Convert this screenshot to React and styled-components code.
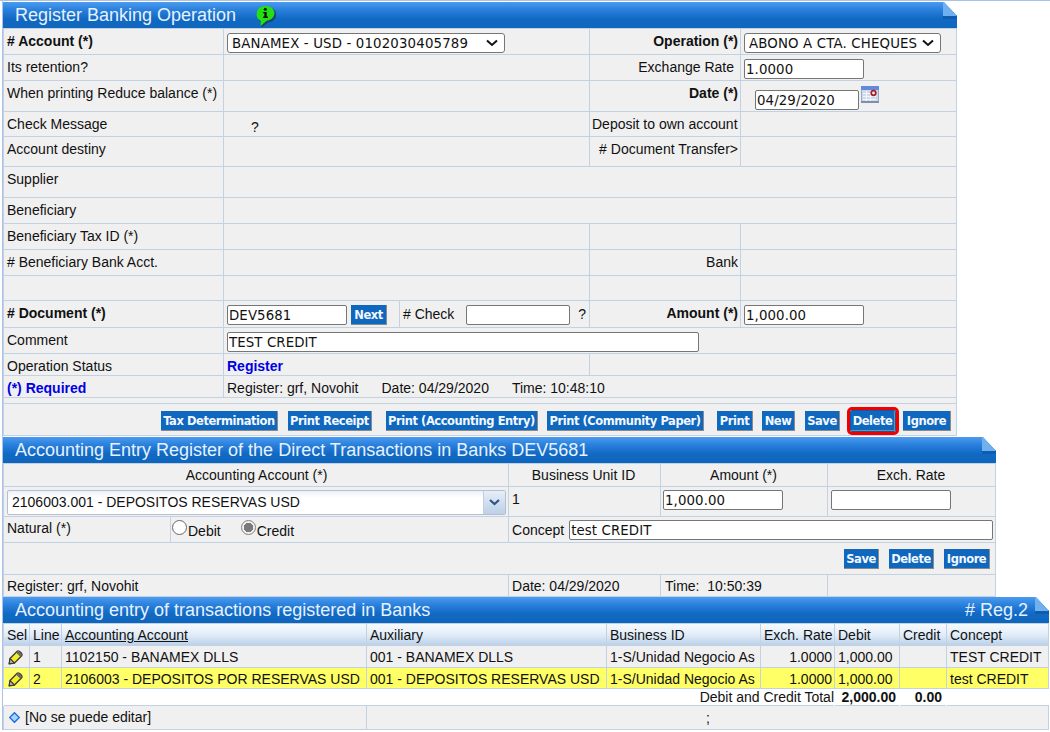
import React from 'react';
import styled, { createGlobalStyle } from 'styled-components';

const GlobalStyle = createGlobalStyle`
  html, body {
    margin: 0;
    padding: 0;
    background: #fff;
    font-family: "Liberation Sans", Arial, sans-serif;
    font-size: 14px;
    color: #111;
  }
`;

const Page = styled.div`
  width: 1047px;
  height: 729px;
  margin-top: 1px;
  margin-left: 2px;
  padding-top: 1px;
  box-sizing: border-box;
  border-left: 1px solid #a9c3e8;
  position: relative;
  &::before {
    content: '';
    position: absolute;
    top: -1px;
    left: -3px;
    width: 1050px;
    height: 1px;
    background: #a9c3e8;
  }
`;

const Panel = styled.section`
  width: ${(p) => p.$w}px;
  margin-top: ${(p) => p.$top || 0}px;
`;

const Header = styled.header`
  position: relative;
  height: 26px;
  margin-right: -1px;
  display: flex;
  align-items: center;
  justify-content: space-between;
  padding: 0 21px 0 12px;
  background: linear-gradient(#4b9bef 0%, #2a80dc 30%, #1169c4 65%, #0f66bc 100%);
  clip-path: polygon(0 0, calc(100% - 13px) 0, 100% 14px, 100% 100%, 0 100%);
`;

const Title = styled.h2`
  margin: 0;
  font-size: 18px;
  font-weight: normal;
  color: #e6f2fd;
  white-space: nowrap;
`;

const Fold = styled.svg`
  position: absolute;
  top: 0;
  right: 0;
`;

const Bubble = styled.svg`
  position: absolute;
  top: 2px;
  left: 250px;
`;

const Grid = styled.table`
  width: 100%;
  table-layout: fixed;
  border-collapse: collapse;
  background: #f0f0f0;
`;

const Row = styled.tr`
  height: ${(p) => p.$h}px;
`;

const Cell = styled.td`
  box-sizing: border-box;
  border: 1px solid #c2d2e2;
  padding: ${(p) => p.$pad || '4px 2px 0 3px'};
  vertical-align: top;
  line-height: 16px;
  white-space: nowrap;
  overflow: hidden;
  text-align: ${(p) => p.$align || 'left'};
  font-weight: ${(p) => (p.$bold ? 'bold' : 'normal')};
  color: ${(p) => (p.$blue ? '#0000e6' : 'inherit')};
`;

const Select = styled.select`
  display: inline-block;
  vertical-align: top;
  box-sizing: border-box;
  width: ${(p) => p.$w}px;
  height: 20px;
  padding: 0 0 0 4px;
  appearance: none;
  border: 1px solid #767676;
  border-radius: 3px;
  font-family: "DejaVu Sans", Verdana, sans-serif;
  font-size: 13.33px;
  letter-spacing: 0.15px;
  color: #111;
  background: #fff url("data:image/svg+xml,%3Csvg xmlns='http://www.w3.org/2000/svg' width='12' height='8'%3E%3Cpath d='M1 1.5 L6 6 L11 1.5' fill='none' stroke='%23111' stroke-width='2'/%3E%3C/svg%3E") no-repeat right 6px center;
`;

const Input = styled.input`
  display: inline-block;
  vertical-align: top;
  box-sizing: border-box;
  width: ${(p) => p.$w}px;
  height: 20px;
  margin-left: ${(p) => p.$ml || 0}px;
  margin-top: ${(p) => p.$mt || 0}px;
  padding: 0 1px;
  border: 1px solid #767676;
  border-radius: 2px;
  font-family: "DejaVu Sans", Verdana, sans-serif;
  font-size: 13.33px;
  letter-spacing: 0.1px;
  color: #111;
  background: #fff;
`;

const Btn = styled.button`
  display: inline-block;
  vertical-align: top;
  box-sizing: border-box;
  width: ${(p) => p.$w}px;
  height: 20px;
  margin-left: ${(p) => p.$ml || 0}px;
  padding: 0;
  border: 0;
  border-right: 1px solid #8a8a8a;
  border-bottom: 1px solid #8a8a8a;
  background: #0f67be;
  color: #f2f8ff;
  font-family: "DejaVu Sans", Verdana, sans-serif;
  font-size: 11.5px;
  font-weight: bold;
  letter-spacing: -0.45px;
  white-space: nowrap;
  outline: ${(p) => (p.$active ? '3px solid #f00000' : 'none')};
  outline-offset: 1px;
  box-shadow: ${(p) => (p.$active ? '0 0 0 1px #0d5ba8' : 'none')};
  border-radius: ${(p) => (p.$active ? '1px' : '0')};
`;

const BtnBar = styled.div`
  display: flex;
  justify-content: flex-end;
  padding-right: ${(p) => p.$right}px;
`;

const Inline = styled.span`
  margin-left: ${(p) => p.$ml || 0}px;
`;

const CalIcon = styled.svg`
  display: inline-block;
  vertical-align: top;
  margin-left: 2px;
  margin-top: 1px;
`;

const Combo = styled.div`
  display: flex;
  box-sizing: border-box;
  width: 499px;
  height: 25px;
  border: 1px solid #b4c0d2;
  border-radius: 2px;
  background: linear-gradient(#eef1f6, #fff 30%);
`;

const ComboText = styled.span`
  flex: 1;
  padding-left: 4px;
  font-size: 14px;
  line-height: 23px;
`;

const ComboArrow = styled.span`
  width: 21px;
  display: flex;
  align-items: center;
  justify-content: center;
  border-left: 1px solid #c2cfe0;
  background: linear-gradient(#e6eef8, #bcd0e8);
`;

const RadioLabel = styled.label`
  display: inline-flex;
  align-items: flex-end;
  margin-left: ${(p) => p.$ml || 0}px;
`;

const RadioDot = styled.input`
  appearance: none;
  box-sizing: border-box;
  width: 15px;
  height: 15px;
  margin: 0 1px 4px 0;
  border: 1px solid #666;
  border-radius: 50%;
  background: #fff;
  &:checked {
    border-color: #808080;
    background: radial-gradient(circle, #7a7a7a 0, #7a7a7a 4.5px, #f0f0f0 5px);
  }
`;

const ConceptRow = styled.div`
  display: flex;
  align-items: center;
  height: 20px;
`;

const HeadRow = styled.tr`
  height: 22px;
  background: linear-gradient(#f6fafe, #e4eef8 45%, #b8cfe9);
`;

const DataRow = styled.tr`
  height: ${(p) => (p.$selected ? 21 : 22)}px;
  background: ${(p) => (p.$selected ? '#ffff66' : '#f0f0f0')};
`;

const TotalRow = styled.tr`
  height: 16px;
  background: #fff;
`;

const TotalCell = styled.td`
  padding: 0 ${(p) => p.$right || 0}px 0 0;
  line-height: 16px;
  text-align: right;
  white-space: nowrap;
  font-weight: ${(p) => (p.$bold ? 'bold' : 'normal')};
  border-left: 1px solid #fff;
`;

const Underlined = styled.span`
  text-decoration: underline;
`;

const SmallIcon = styled.svg`
  display: block;
`;

const NoteText = styled.span`
  margin-left: 5px;
`;

const NoteRow = styled.div`
  display: flex;
  align-items: center;
  padding-left: 2px;
`;

const FoldCorner = () => (
  <Fold width="14" height="17" viewBox="0 0 14 17">
    <rect x="0" y="13" width="14" height="4" fill="#0e5cae" />
    <polygon points="0,0 1,0 14,14 0,14" fill="#6fb1ee" />
  </Fold>
);

const InfoBubble = () => (
  <Bubble width="26" height="25" viewBox="0 0 22 21">
    <path d="M7 20 L7.5 15.5 C3 13.5 3.5 7 6.5 4.5 C10 1.5 17 2 19 6 C21 10.5 18 15 13 15.5 Z" fill="#1c3550" opacity="0.7" />
    <path d="M6.5 18.5 L6.5 14 C2.5 12.5 2 6.5 5 3.5 C8.5 0.5 15.5 1 17.5 5 C19.5 9.5 16.5 13.5 11.5 14 Z" fill="#22e012" />
    <circle cx="10.4" cy="4.3" r="1.3" fill="#111" />
    <path d="M8.6 6.6 H11.6 V10.6 H12.6 V11.8 H8.6 V10.6 H9.6 V7.8 H8.6 Z" fill="#111" />
  </Bubble>
);

const Calendar = () => (
  <CalIcon width="18" height="17" viewBox="0 0 18 17">
    <rect x="0" y="0" width="18" height="17" fill="#cfd9ea" />
    <rect x="0" y="0" width="18" height="4" fill="#6389d8" />
    <rect x="0" y="15" width="18" height="2" fill="#7d90b0" />
    <rect x="0" y="4" width="1" height="11" fill="#98a9c8" />
    <rect x="17" y="4" width="1" height="11" fill="#98a9c8" />
    <path d="M2 7.5 H10 M2 10.5 H15 M2 13.5 H15 M5.5 5 V15 M9.5 5 V15" stroke="#f3f6fb" strokeWidth="1" />
    <circle cx="12.5" cy="7" r="2.3" fill="#f1e6e6" stroke="#a51f2a" strokeWidth="1.7" />
  </CalIcon>
);

const Pencil = () => (
  <SmallIcon width="16" height="16" viewBox="0 0 16 16">
    <path d="M1.2 14.8 L2 9.5 L9.2 2.3 C10.8 0.8 15.2 5 13.7 6.8 L6.5 14 Z" fill="#f6ee24" stroke="#3a3a3a" strokeWidth="1.3" strokeLinejoin="round" />
    <path d="M1.2 14.8 L2 9.5 L6.5 14 Z" fill="#b5b5b5" stroke="#3a3a3a" strokeWidth="1.1" strokeLinejoin="round" />
    <path d="M9.4 2.6 C11 1.6 14.2 4.8 13.4 6.6 L12.3 7.7 L8.2 3.7 Z" fill="#6a6a6a" />
  </SmallIcon>
);

const Diamond = () => (
  <SmallIcon width="11" height="11" viewBox="0 0 12 12">
    <polygon points="6,0.7 11.3,6 6,11.3 0.7,6" fill="#a4d4ff" stroke="#1f6ee0" strokeWidth="1.5" />
  </SmallIcon>
);

const ComboChevron = () => (
  <svg width="11" height="7" viewBox="0 0 11 7">
    <path d="M1 1 L5.5 5 L10 1" fill="none" stroke="#33538a" strokeWidth="2.2" />
  </svg>
);

const RegisterForm = () => (
  <Panel $w={953}>
    <Header>
      <Title>Register Banking Operation</Title>
      <InfoBubble />
      <FoldCorner />
    </Header>
    <Grid>
      <colgroup>
        <col style={{ width: 220 }} />
        <col style={{ width: 176 }} />
        <col style={{ width: 190 }} />
        <col style={{ width: 151 }} />
        <col style={{ width: 216 }} />
      </colgroup>
      <tbody>
        <Row $h={26}>
          <Cell $bold># Account (*)</Cell>
          <Cell colSpan={2}>
            <Select $w={278} defaultValue="a">
              <option value="a">BANAMEX - USD - 0102030405789</option>
            </Select>
          </Cell>
          <Cell $bold $align="right">Operation (*)</Cell>
          <Cell>
            <Select $w={197} defaultValue="a">
              <option value="a">ABONO A CTA. CHEQUES</option>
            </Select>
          </Cell>
        </Row>
        <Row $h={26}>
          <Cell>Its retention?</Cell>
          <Cell colSpan={2} />
          <Cell $align="right" $pad="4px 6px 0 3px">Exchange Rate</Cell>
          <Cell>
            <Input $w={120} defaultValue="1.0000" />
          </Cell>
        </Row>
        <Row $h={31}>
          <Cell>When printing Reduce balance (*)</Cell>
          <Cell colSpan={2} />
          <Cell $bold $align="right">Date (*)</Cell>
          <Cell>
            <Input $w={104} $ml={11} $mt={5} defaultValue="04/29/2020" />
            <Calendar />
          </Cell>
        </Row>
        <Row $h={25}>
          <Cell>Check Message</Cell>
          <Cell colSpan={2} $pad="7px 2px 0 27px">?</Cell>
          <Cell $align="right" $pad="4px 3px 0 2px">Deposit to own account</Cell>
          <Cell />
        </Row>
        <Row $h={30}>
          <Cell>Account destiny</Cell>
          <Cell colSpan={2} />
          <Cell $align="right"># Document Transfer&gt;</Cell>
          <Cell />
        </Row>
        <Row $h={31}>
          <Cell>Supplier</Cell>
          <Cell colSpan={4} />
        </Row>
        <Row $h={26}>
          <Cell>Beneficiary</Cell>
          <Cell colSpan={4} />
        </Row>
        <Row $h={26}>
          <Cell>Beneficiary Tax ID (*)</Cell>
          <Cell colSpan={2} />
          <Cell />
          <Cell />
        </Row>
        <Row $h={26}>
          <Cell># Beneficiary Bank Acct.</Cell>
          <Cell colSpan={2} />
          <Cell $align="right">Bank</Cell>
          <Cell />
        </Row>
        <Row $h={25}>
          <Cell />
          <Cell colSpan={2} />
          <Cell />
          <Cell />
        </Row>
        <Row $h={27}>
          <Cell $bold># Document (*)</Cell>
          <Cell>
            <Input $w={120} defaultValue="DEV5681" />
            <Btn $w={36} $ml={4}>Next</Btn>
          </Cell>
          <Cell $pad="5px 2px 0 3px">
            # Check
            <Input $w={104} $ml={12} $mt={-1} />
            <Inline $ml={8}>?</Inline>
          </Cell>
          <Cell $bold $align="right">Amount (*)</Cell>
          <Cell>
            <Input $w={120} defaultValue="1,000.00" />
          </Cell>
        </Row>
        <Row $h={26}>
          <Cell>Comment</Cell>
          <Cell colSpan={4}>
            <Input $w={472} defaultValue="TEST CREDIT" />
          </Cell>
        </Row>
        <Row $h={22}>
          <Cell>Operation Status</Cell>
          <Cell colSpan={2} $bold $blue>Register</Cell>
          <Cell colSpan={2} />
        </Row>
        <Row $h={22}>
          <Cell $bold $blue>(*) Required</Cell>
          <Cell colSpan={4}>
            Register: grf, Novohit
            <Inline $ml={23}>Date: 04/29/2020</Inline>
            <Inline $ml={23}>Time: 10:48:10</Inline>
          </Cell>
        </Row>
        <Row $h={6}>
          <Cell colSpan={5} $pad="0" />
        </Row>
        <Row $h={32}>
          <Cell colSpan={5} $pad="7px 0 0 0">
            <BtnBar $right={5}>
              <Btn $w={117}>Tax Determination</Btn>
              <Btn $w={84} $ml={10}>Print Receipt</Btn>
              <Btn $w={152} $ml={14}>Print (Accounting Entry)</Btn>
              <Btn $w={157} $ml={9}>Print (Community Paper)</Btn>
              <Btn $w={36} $ml={13}>Print</Btn>
              <Btn $w={33} $ml={9}>New</Btn>
              <Btn $w={35} $ml={10}>Save</Btn>
              <Btn $w={44} $ml={11} $active>Delete</Btn>
              <Btn $w={48} $ml={8}>Ignore</Btn>
            </BtnBar>
          </Cell>
        </Row>
      </tbody>
    </Grid>
  </Panel>
);

const EntryForm = () => (
  <Panel $w={992} $top={1}>
    <Header>
      <Title>Accounting Entry Register of the Direct Transactions in Banks DEV5681</Title>
      <FoldCorner />
    </Header>
    <Grid>
      <colgroup>
        <col style={{ width: 167 }} />
        <col style={{ width: 338 }} />
        <col style={{ width: 152 }} />
        <col style={{ width: 167 }} />
        <col style={{ width: 168 }} />
      </colgroup>
      <tbody>
        <Row $h={23}>
          <Cell colSpan={2} $align="center" $pad="3px 2px 0 3px">Accounting Account (*)</Cell>
          <Cell $align="center" $pad="3px 2px 0 0">Business Unit ID</Cell>
          <Cell $align="center" $pad="3px 2px 0 1px">Amount (*)</Cell>
          <Cell $align="center" $pad="3px 2px 0 1px">Exch. Rate</Cell>
        </Row>
        <Row $h={30}>
          <Cell colSpan={2} $pad="3px 2px 0 3px">
            <Combo>
              <ComboText>2106003.001 - DEPOSITOS RESERVAS USD</ComboText>
              <ComboArrow>
                <ComboChevron />
              </ComboArrow>
            </Combo>
          </Cell>
          <Cell>1</Cell>
          <Cell $pad="3px 2px 0 2px">
            <Input $w={120} defaultValue="1,000.00" />
          </Cell>
          <Cell $pad="3px 2px 0 3px">
            <Input $w={120} />
          </Cell>
        </Row>
        <Row $h={26}>
          <Cell $pad="3px 2px 0 3px">Natural (*)</Cell>
          <Cell $pad="3px 2px 0 1px">
            <RadioLabel>
              <RadioDot type="radio" name="nat" />
              Debit
            </RadioLabel>
            <RadioLabel $ml={20}>
              <RadioDot type="radio" name="nat" defaultChecked />
              Credit
            </RadioLabel>
          </Cell>
          <Cell colSpan={3} $pad="3px 2px 0 3px">
            <ConceptRow>
              Concept
              <Input $w={424} $ml={5} defaultValue="test CREDIT" />
            </ConceptRow>
          </Cell>
        </Row>
        <Row $h={32}>
          <Cell colSpan={5} $pad="6px 0 0 0">
            <BtnBar $right={5}>
              <Btn $w={35}>Save</Btn>
              <Btn $w={45} $ml={10}>Delete</Btn>
              <Btn $w={46} $ml={10}>Ignore</Btn>
            </BtnBar>
          </Cell>
        </Row>
        <Row $h={22}>
          <Cell colSpan={2} $pad="3px 2px 0 3px">Register: grf, Novohit</Cell>
          <Cell $pad="3px 2px 0 3px">Date: 04/29/2020</Cell>
          <Cell $pad="3px 2px 0 4px">Time:&nbsp; 10:50:39</Cell>
          <Cell />
        </Row>
      </tbody>
    </Grid>
  </Panel>
);

const lines = [
  ['1', '1102150 - BANAMEX DLLS', '001 - BANAMEX DLLS', '1-S/Unidad Negocio As', '1.0000', '1,000.00', 'TEST CREDIT'],
  ['2', '2106003 - DEPOSITOS POR RESERVAS USD', '001 - DEPOSITOS RESERVAS USD', '1-S/Unidad Negocio As', '1.0000', '1,000.00', 'test CREDIT'],
];

const EntryList = () => (
  <Panel $w={1045}>
    <Header>
      <Title>Accounting entry of transactions registered in Banks</Title>
      <Title># Reg.2</Title>
      <FoldCorner />
    </Header>
    <Grid>
      <colgroup>
        <col style={{ width: 26 }} />
        <col style={{ width: 32 }} />
        <col style={{ width: 305 }} />
        <col style={{ width: 240 }} />
        <col style={{ width: 154 }} />
        <col style={{ width: 74 }} />
        <col style={{ width: 65 }} />
        <col style={{ width: 47 }} />
        <col style={{ width: 102 }} />
      </colgroup>
      <tbody>
        <HeadRow>
          <Cell $pad="3px 2px 0 3px">Sel</Cell>
          <Cell $pad="3px 2px 0 3px">Line</Cell>
          <Cell $pad="3px 2px 0 3px"><Underlined>Accounting Account</Underlined></Cell>
          <Cell $pad="3px 2px 0 3px">Auxiliary</Cell>
          <Cell $pad="3px 2px 0 3px">Business ID</Cell>
          <Cell $pad="3px 2px 0 3px">Exch. Rate</Cell>
          <Cell $pad="3px 2px 0 3px">Debit</Cell>
          <Cell $pad="3px 2px 0 3px">Credit</Cell>
          <Cell $pad="3px 2px 0 3px">Concept</Cell>
        </HeadRow>
        {lines.map((l, i) => (
          <DataRow key={l[0]} $selected={i === 1}>
            <Cell $pad="3px 0 0 4px"><Pencil /></Cell>
            <Cell $pad="3px 2px 0 3px">{l[0]}</Cell>
            <Cell $pad="3px 2px 0 3px">{l[1]}</Cell>
            <Cell $pad="3px 2px 0 3px">{l[2]}</Cell>
            <Cell $pad="3px 2px 0 3px">{l[3]}</Cell>
            <Cell $pad="3px 2px 0 3px" $align="right">{l[4]}</Cell>
            <Cell $pad="3px 2px 0 3px">{l[5]}</Cell>
            <Cell />
            <Cell $pad="3px 2px 0 3px">{l[6]}</Cell>
          </DataRow>
        ))}
        <TotalRow>
          <TotalCell colSpan={6}>Debit and Credit Total</TotalCell>
          <TotalCell $bold $right={3}>2,000.00</TotalCell>
          <TotalCell $bold $right={4}>0.00</TotalCell>
          <TotalCell />
        </TotalRow>
        <Row $h={24}>
          <Cell colSpan={3} $pad="3px 2px 0 3px">
            <NoteRow>
              <Diamond />
              <NoteText>[No se puede editar]</NoteText>
            </NoteRow>
          </Cell>
          <Cell colSpan={6} $align="center">;</Cell>
        </Row>
      </tbody>
    </Grid>
  </Panel>
);

export default function App() {
  return (
    <>
      <GlobalStyle />
      <Page>
        <RegisterForm />
        <EntryForm />
        <EntryList />
      </Page>
    </>
  );
}
